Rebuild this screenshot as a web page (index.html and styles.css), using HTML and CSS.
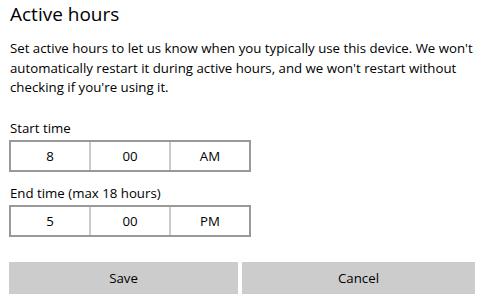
FILE: index.html
```html
<!DOCTYPE html>
<html lang="en">
<head>
<meta charset="utf-8">
<title>Active hours</title>
<link rel="stylesheet" href="styles.css">
</head>
<body>
<main class="page">
  <h1 class="title">Active hours</h1>
  <p class="desc">Set active hours to let us know when you typically use this device. We won't automatically restart it during active hours, and we won't restart without checking if you're using it.</p>
  <div class="field first">
    <div class="label">Start time</div>
    <div class="picker">
      <span class="cell">8</span>
      <span class="cell">00</span>
      <span class="cell">AM</span>
    </div>
  </div>
  <div class="field">
    <div class="label">End time (max 18 hours)</div>
    <div class="picker">
      <span class="cell">5</span>
      <span class="cell">00</span>
      <span class="cell">PM</span>
    </div>
  </div>
  <div class="actions">
    <button class="btn">Save</button>
    <button class="btn">Cancel</button>
  </div>
</main>
</body>
</html>
```

FILE: styles.css
```css
html, body {
  margin: 0;
  padding: 0;
  background: #ffffff;
}

.page {
  width: 496px;
  height: 300px;
  box-sizing: border-box;
  padding: 0 0 0 9px;
  font-family: "Open Sans", "Noto Sans", sans-serif;
  color: #000000;
  overflow: hidden;
}

.title {
  margin: 0;
  padding-left: 1px;
  font-size: 19px;
  font-weight: 400;
  line-height: 28px;
}

.desc {
  margin: 11px 0 0 0;
  padding-left: 1px;
  width: 476px;
  font-size: 13.25px;
  line-height: 19.5px;
}

.field {
  display: flex;
  flex-direction: column;
}

.field.first {
  margin-top: 19px;
}

.field + .field {
  margin-top: 10px;
}

.label {
  padding-left: 1px;
  font-size: 13.25px;
  line-height: 23px;
}

.picker {
  display: flex;
  width: 242px;
  height: 32px;
  box-sizing: border-box;
  border: 2px solid #999999;
  gap: 2px;
  background: #cccccc;
}

.cell {
  flex: 1;
  display: flex;
  align-items: center;
  justify-content: center;
  background: #ffffff;
  font-size: 13.25px;
}

.actions {
  display: grid;
  grid-template-columns: 229px 233px;
  column-gap: 4px;
  margin-top: 25px;
}

.btn {
  height: 32px;
  border: none;
  margin: 0;
  background: #cccccc;
  font-family: "Open Sans", "Noto Sans", sans-serif;
  font-size: 13.25px;
  color: #000000;
}
```
